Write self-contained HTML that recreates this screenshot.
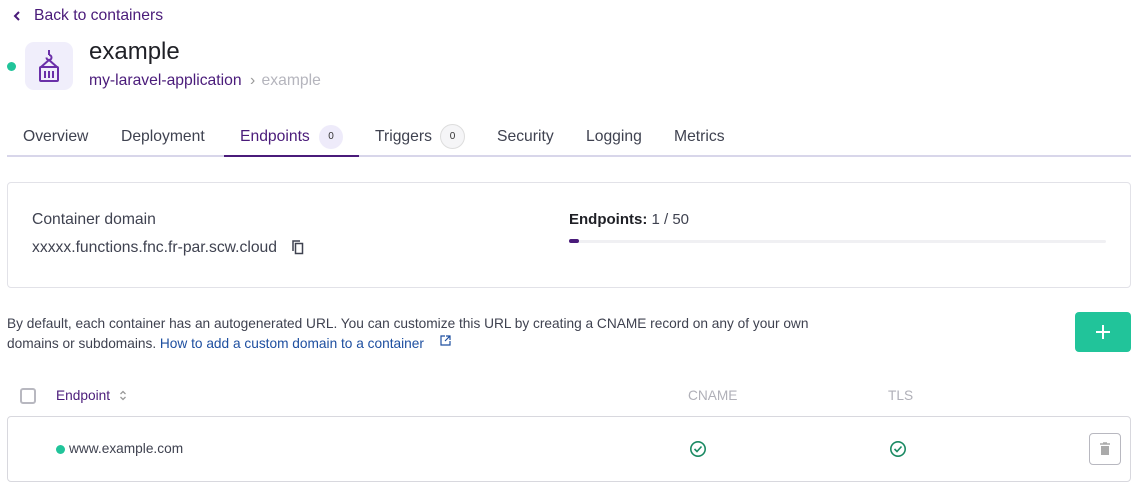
<!DOCTYPE html>
<html><head><style>
*{margin:0;padding:0;box-sizing:border-box}
body{width:1141px;height:499px;background:#fff;font-family:"Liberation Sans",sans-serif;color:#3f4250;position:relative;overflow:hidden}
.a{position:absolute;white-space:nowrap}
</style></head><body>
<svg class="a" style="left:12px;top:10px" width="10" height="12" viewBox="0 0 10 12"><path d="M7 2L3 6l4 4" stroke="#4a1b7a" stroke-width="2" fill="none"/></svg>
<div class="a" style="left:34px;top:7px;font-size:15.7px;color:#4a1b7a">Back to containers</div>
<div class="a" style="left:7px;top:62px;width:9px;height:9px;border-radius:50%;background:#21c49a"></div>
<div class="a" style="left:25px;top:42px;width:48px;height:48px;border-radius:9px;background:#f0eefb"></div>
<svg class="a" style="left:25px;top:42px" width="48" height="48" viewBox="0 0 48 48"><g stroke="#6a2fa8" stroke-width="2" fill="none"><path d="M24 8v5M24 13a2.5 2.5 0 1 1-2.5 2.5"/><path d="M16 25l8-7 8 7"/><rect x="15" y="25" width="18" height="14" rx="1"/><path d="M20 29v7M24 29v7M28 29v7"/></g></svg>
<div class="a" style="left:89px;top:38px;font-size:24px;color:#1f2026">example</div>
<div class="a" style="left:89px;top:72px;font-size:15.7px;color:#4a1b7a">my-laravel-application <span style="color:#999;margin-left:4px">›</span> <span style="color:#b5b5bd;margin-left:2px">example</span></div>
<div class="a" style="left:7px;top:155px;width:1124px;height:2px;background:#d8d6ea"></div>
<div class="a" style="left:224px;top:155px;width:135px;height:2px;background:#4a1b7a"></div>
<div class="a" style="left:23px;top:128px;font-size:15.7px">Overview</div>
<div class="a" style="left:121px;top:128px;font-size:15.7px">Deployment</div>
<div class="a" style="left:240px;top:128px;font-size:15.7px;color:#4a1b7a">Endpoints</div>
<div class="a" style="left:319px;top:125px;width:24px;height:24px;border-radius:50%;background:#eeebfa;font-size:10px;text-align:center;line-height:24px;color:#333">0</div>
<div class="a" style="left:375px;top:128px;font-size:15.7px">Triggers</div>
<div class="a" style="left:440px;top:124px;width:25px;height:25px;border-radius:50%;background:#f5f5f7;border:1px solid #ddd;font-size:10px;text-align:center;line-height:23px;color:#333">0</div>
<div class="a" style="left:497px;top:128px;font-size:15.7px">Security</div>
<div class="a" style="left:586px;top:128px;font-size:15.7px">Logging</div>
<div class="a" style="left:674px;top:128px;font-size:15.7px">Metrics</div>
<div class="a" style="left:7px;top:182px;width:1124px;height:106px;border:1px solid #e2e2e8;border-radius:4px"></div>
<div class="a" style="left:32px;top:211px;font-size:15.7px">Container domain</div>
<div class="a" style="left:32px;top:239px;font-size:15.7px">xxxxx.functions.fnc.fr-par.scw.cloud</div>
<svg class="a" style="left:291px;top:239px" width="14" height="16" viewBox="0 0 14 16"><g stroke="#3f4250" stroke-width="1.5" fill="none"><path d="M2 12V2h7"/><rect x="4.5" y="4.5" width="7" height="10"/></g></svg>
<div class="a" style="left:569px;top:211px;font-size:15px;color:#1f2026"><b>Endpoints:</b> <span style="color:#3f4250">1 / 50</span></div>
<div class="a" style="left:569px;top:240px;width:537px;height:3px;background:#f0f0f3;border-radius:2px"></div>
<div class="a" style="left:569px;top:239px;width:10px;height:4px;background:#4a1b7a;border-radius:2px"></div>
<div class="a" style="left:7px;top:314px;font-size:13.7px;line-height:20px;color:#3f4250">By default, each container has an autogenerated URL. You can customize this URL by creating a CNAME record on any of your own<br>domains or subdomains. <span style="color:#1e4fa0">How to add a custom domain to a container</span></div>
<svg class="a" style="left:440px;top:335px" width="11" height="11" viewBox="0 0 11 11"><g stroke="#1e4fa0" stroke-width="1.2" fill="none"><path d="M5 1H1v9h9V6"/><path d="M6 1h4v4M10 1L5 6"/></g></svg>
<div class="a" style="left:1075px;top:312px;width:56px;height:40px;border-radius:4px;background:#21c49a"></div>
<svg class="a" style="left:1095px;top:324px" width="16" height="16" viewBox="0 0 16 16"><path d="M8 1v14M1 8h14" stroke="#fff" stroke-width="2"/></svg>
<div class="a" style="left:20px;top:388px;width:16px;height:16px;border:2px solid #b8b8c0;border-radius:3px"></div>
<div class="a" style="left:56px;top:388px;font-size:13.7px;color:#4a1b7a">Endpoint</div>
<svg class="a" style="left:119px;top:390px" width="8" height="11" viewBox="0 0 8 11"><path d="M1.5 4L4 1.5 6.5 4M1.5 7L4 9.5 6.5 7" stroke="#999" stroke-width="1.3" fill="none"/></svg>
<div class="a" style="left:688px;top:388px;font-size:13.7px;color:#b0b0b8">CNAME</div>
<div class="a" style="left:888px;top:388px;font-size:13.7px;color:#b0b0b8">TLS</div>
<div class="a" style="left:7px;top:416px;width:1124px;height:66px;border:1px solid #d8d8de;border-radius:4px"></div>
<div class="a" style="left:56px;top:445px;width:9px;height:9px;border-radius:50%;background:#21c49a"></div>
<div class="a" style="left:69px;top:441px;font-size:13.7px">www.example.com</div>
<svg class="a" style="left:689px;top:440px" width="18" height="18" viewBox="0 0 18 18"><g stroke="#1b8a63" stroke-width="1.6" fill="none"><circle cx="9" cy="9" r="7.2"/><path d="M5.5 9l2.5 2.5 4.5-5"/></g></svg>
<svg class="a" style="left:889px;top:440px" width="18" height="18" viewBox="0 0 18 18"><g stroke="#1b8a63" stroke-width="1.6" fill="none"><circle cx="9" cy="9" r="7.2"/><path d="M5.5 9l2.5 2.5 4.5-5"/></g></svg>
<div class="a" style="left:1089px;top:433px;width:32px;height:32px;border:1px solid #b8b8c0;border-radius:4px"></div>
<svg class="a" style="left:1099px;top:442px" width="12" height="14" viewBox="0 0 12 14"><path d="M1 2h10M4 1h4" stroke="#aaa" stroke-width="1.5"/><rect x="2" y="4" width="8" height="9" fill="#aaa"/></svg>
</body></html>
